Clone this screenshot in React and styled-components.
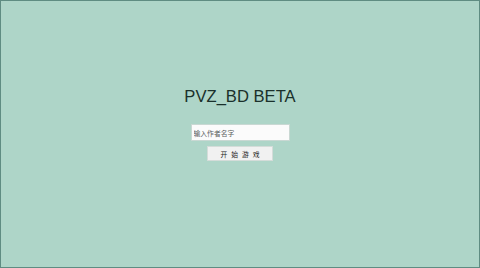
import React from 'react'
import styled, { createGlobalStyle } from 'styled-components'

const GlobalStyle = createGlobalStyle`
  html, body {
    margin: 0;
    padding: 0;
    height: 100%;
  }
  #root {
    height: 100%;
  }
`

const Stage = styled.main`
  box-sizing: border-box;
  height: 100%;
  display: flex;
  flex-direction: column;
  align-items: center;
  padding-top: 86px;
  background: #aed5c8;
  border: 1px solid #5f8c82;
  font-family: 'Liberation Sans', Arial, 'Noto Sans CJK SC', sans-serif;
`

const Title = styled.h1`
  margin: 0;
  font-size: 16.6px;
  line-height: 20px;
  font-weight: normal;
  color: #1a302b;
`

const NameInput = styled.input`
  box-sizing: border-box;
  margin-top: 17px;
  width: 99px;
  height: 17px;
  padding: 0 0 0 2px;
  border: 1px solid #c9d8d3;
  background: #fbfbfb;
  font-family: 'Noto Sans CJK SC', sans-serif;
  font-size: 6.8px;
  color: #333;
  outline: none;
  &::placeholder {
    color: #5a605e;
  }
`

const StartButton = styled.button`
  box-sizing: border-box;
  margin-top: 5px;
  width: 66px;
  height: 15px;
  padding: 0;
  border: 1px solid #d4dcd9;
  background: #f1f1f1;
  font-family: 'Noto Sans CJK SC', sans-serif;
  font-size: 6.8px;
  word-spacing: 2.4px;
  color: #222;
  cursor: pointer;
`

export default function App () {
  return (
    <>
      <GlobalStyle />
      <Stage>
        <Title>PVZ_BD BETA</Title>
        <NameInput type='text' placeholder='输入作者名字' />
        <StartButton>开 始 游 戏</StartButton>
      </Stage>
    </>
  )
}
